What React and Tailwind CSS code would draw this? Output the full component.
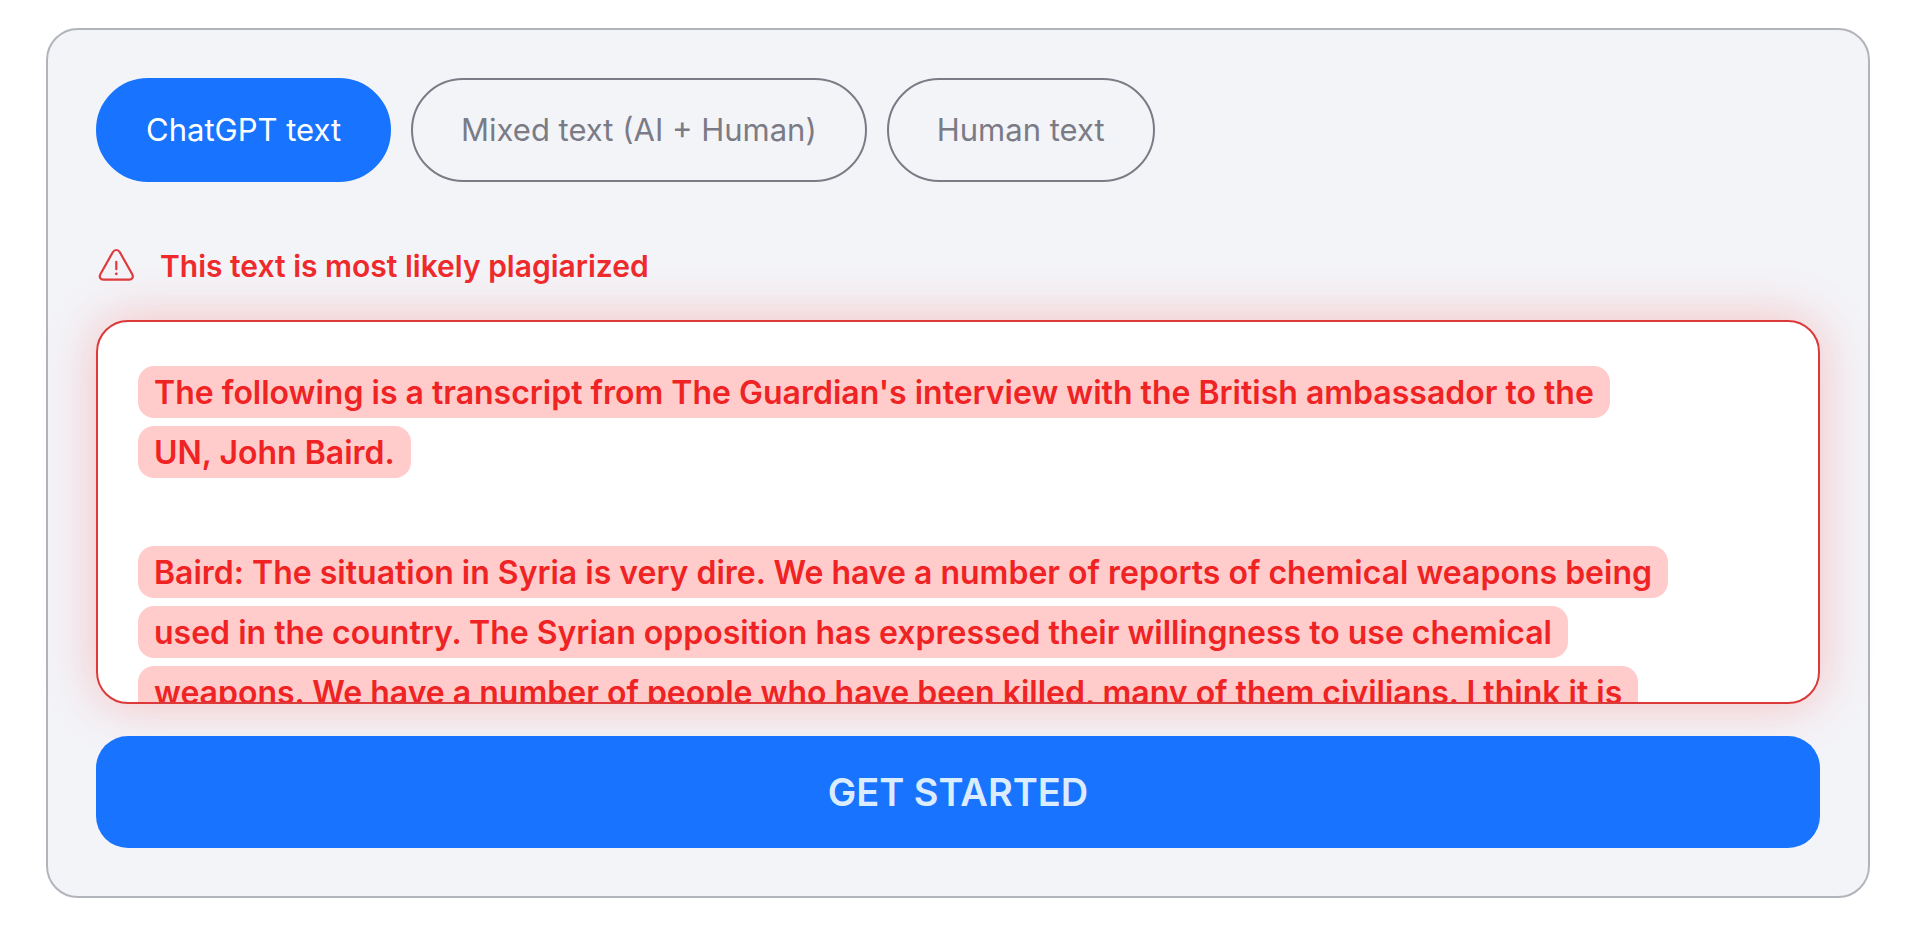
import { useState } from "react";
import clsx from "clsx";

const SAMPLES = ["ChatGPT text", "Mixed text (AI + Human)", "Human text"];

const PARAGRAPHS = [
    [
        "The following is a transcript from The Guardian's interview with the British ambassador to the",
        "UN, John Baird.",
    ],
    [
        "Baird: The situation in Syria is very dire. We have a number of reports of chemical weapons being",
        "used in the country. The Syrian opposition has expressed their willingness to use chemical",
        "weapons. We have a number of people who have been killed, many of them civilians. I think it is",
    ],
];

function WarningIcon() {
    return (
        <svg
            viewBox="0 0 40 40"
            className="h-10 w-10 shrink-0"
            fill="none"
            stroke="#e03a3c"
            strokeWidth="2.2"
            strokeLinecap="round"
            strokeLinejoin="round"
            aria-hidden="true"
        >
            <path d="M16.900 6 4.500 28C2.800 31 4.300 33.700 7.500 33.700h25.600c3.200 0 4.700-2.700 3-5.700L23.700 6c-1.600-2.700-5.200-2.700-6.800 0Z" />
            <path d="M20.300 15.800v7.400" />
            <circle cx="20.300" cy="27.800" r="1.400" fill="#e03a3c" stroke="none" />
        </svg>
    );
}

export default function App() {
    const [active, setActive] = useState(SAMPLES[0]);

    return (
        <main className="min-h-screen bg-white pt-7 pr-10 pb-9 pl-[46px] font-['Inter',sans-serif]">
            <section className="rounded-[32px] border-2 border-[#b2b4bb] bg-[#f3f4f8] p-12">
                <div className="flex flex-wrap gap-5">
                    {SAMPLES.map((label) => (
                        <button
                            key={label}
                            type="button"
                            aria-pressed={active === label}
                            onClick={() => setActive(label)}
                            className={clsx(
                                "h-26 rounded-full border-2 px-12 text-[31px]",
                                active === label
                                    ? "border-[#1874ff] bg-[#1874ff] text-white"
                                    : "border-[#7b7b86] text-[#7b7b86]"
                            )}
                        >
                            {label}
                        </button>
                    ))}
                </div>

                <div className="mt-16 flex h-10 items-center gap-6">
                    <WarningIcon />
                    <p className="text-[30px] font-semibold text-[#ee2a2c]">
                        This text is most likely plagiarized
                    </p>
                </div>

                <div className="mt-[34px] h-96 overflow-hidden rounded-[32px] border-2 border-[#dc3a3a] bg-white px-10 pt-[41px] text-[32px] leading-[60px] font-semibold text-[#f02324] shadow-[0_0_52px_rgba(255,40,40,0.26)]">
                    {PARAGRAPHS.map((lines) => (
                        <p key={lines[0]} className="mb-15">
                            {lines.map((line) => (
                                <span key={line} className="block whitespace-nowrap">
                                    <mark className="rounded-2xl bg-[#ffcccb] px-4 pt-[7px] pb-1.5 text-inherit">
                                        {line}
                                    </mark>
                                </span>
                            ))}
                        </p>
                    ))}
                </div>

                <button
                    type="button"
                    className="mt-8 h-28 w-full rounded-[32px] bg-[#1874ff] text-[38px] font-semibold text-[#dcecff]"
                >
                    GET STARTED
                </button>
            </section>
        </main>
    );
}
